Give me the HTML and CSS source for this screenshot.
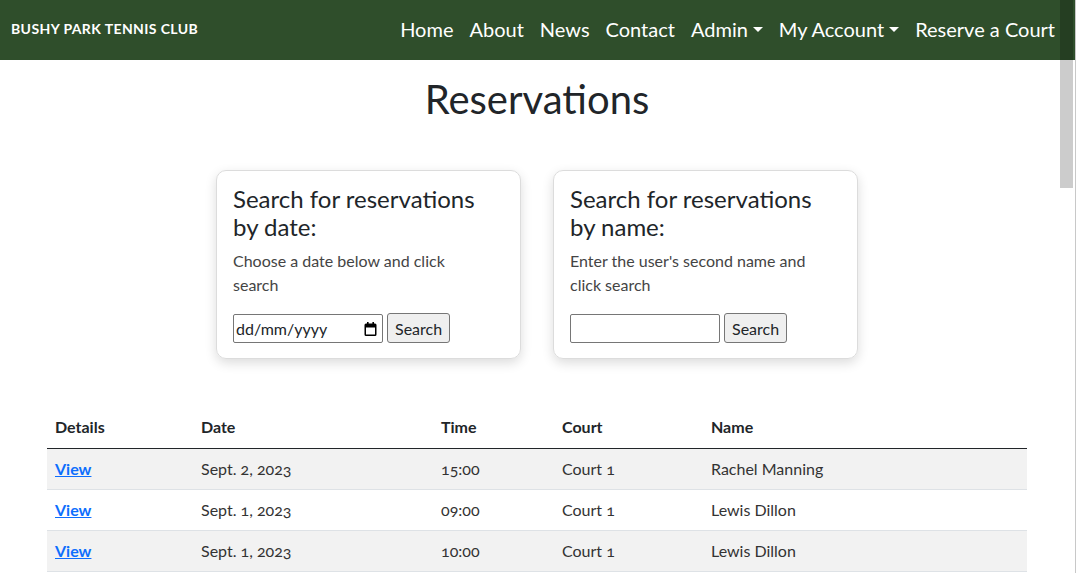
FILE: index.html
```html
<!DOCTYPE html>
<html lang="en-GB">
<head>
<meta charset="utf-8">
<title>Reservations</title>
<link rel="stylesheet" href="styles.css">
</head>
<body>
<nav class="navbar">
  <a class="brand" href="#">BUSHY PARK TENNIS CLUB</a>
  <ul class="nav-links">
    <li><a href="#">Home</a></li>
    <li><a href="#">About</a></li>
    <li><a href="#">News</a></li>
    <li><a href="#">Contact</a></li>
    <li><a href="#" class="dropdown">Admin</a></li>
    <li><a href="#" class="dropdown">My Account</a></li>
    <li><a href="#">Reserve a Court</a></li>
  </ul>
</nav>
<main class="page">
  <h1 class="title">Reservations</h1>
  <section class="cards">
    <div class="card">
      <h4 class="card-title">Search for reservations by date:</h4>
      <p class="card-text">Choose a date below and click search</p>
      <form class="search-form">
        <span class="date-wrap">
          <input type="text" class="field date-field" placeholder="dd/mm/yyyy">
          <svg class="cal-icon" width="13" height="14" viewBox="0 0 13 14" aria-hidden="true">
            <rect x="3" y="0" width="1.6" height="3" fill="#000"/>
            <rect x="8.4" y="0" width="1.6" height="3" fill="#000"/>
            <path d="M2 1.5h9a1.5 1.5 0 0 1 1.5 1.5v9.5a1.5 1.5 0 0 1-1.5 1.5h-9a1.5 1.5 0 0 1-1.5-1.5V3a1.5 1.5 0 0 1 1.5-1.5zM2 5.5v7h9v-7z" fill="#000" fill-rule="evenodd"/>
          </svg>
        </span>
        <button type="button" class="btn">Search</button>
      </form>
    </div>
    <div class="card">
      <h4 class="card-title">Search for reservations by name:</h4>
      <p class="card-text">Enter the user's second name and click search</p>
      <form class="search-form">
        <input type="text" class="field text-field">
        <button type="button" class="btn">Search</button>
      </form>
    </div>
  </section>
  <table class="res-table">
    <thead>
      <tr>
        <th class="c-details">Details</th>
        <th class="c-date">Date</th>
        <th class="c-time">Time</th>
        <th class="c-court">Court</th>
        <th class="c-name">Name</th>
      </tr>
    </thead>
    <tbody>
      <tr class="striped">
        <td><a href="#" class="view">View</a></td>
        <td>Sept. 2, 2023</td>
        <td>15:00</td>
        <td>Court 1</td>
        <td>Rachel Manning</td>
      </tr>
      <tr>
        <td><a href="#" class="view">View</a></td>
        <td>Sept. 1, 2023</td>
        <td>09:00</td>
        <td>Court 1</td>
        <td>Lewis Dillon</td>
      </tr>
      <tr class="striped">
        <td><a href="#" class="view">View</a></td>
        <td>Sept. 1, 2023</td>
        <td>10:00</td>
        <td>Court 1</td>
        <td>Lewis Dillon</td>
      </tr>
    </tbody>
  </table>
</main>
<div class="scroll-thumb"></div>
<div class="scroll-edge"></div>
</body>
</html>
```
FILE: styles.css
```css
html, body {
  margin: 0;
  padding: 0;
  background: #ffffff;
  overflow: hidden;
}
body {
  font-family: "Lato", "Open Sans", sans-serif;
  font-variant-numeric: oldstyle-nums;
  color: #212529;
  font-size: 16px;
  line-height: 1.5;
}
.navbar {
  height: 60px;
  box-sizing: border-box;
  background: #2f4e2b;
  display: flex;
  align-items: center;
  justify-content: space-between;
  padding: 0 13px 3px 11px;
}
.brand {
  color: #ffffff;
  font-weight: 700;
  font-size: 14px;
  text-decoration: none;
  letter-spacing: 0.4px;
}
.nav-links {
  list-style: none;
  display: flex;
  margin: 0;
  padding: 0;
}
.nav-links a {
  display: block;
  color: #ffffff;
  text-decoration: none;
  font-size: 20px;
  padding: 0 8px;
  line-height: 30px;
}
.dropdown::after {
  content: "";
  display: inline-block;
  margin-left: 5px;
  vertical-align: 5px;
  border-top: 5px solid #ffffff;
  border-left: 5px solid transparent;
  border-right: 5px solid transparent;
}
.page {
  width: 980px;
  padding-right: 2px;
  margin: 0 auto;
}
.title {
  text-align: center;
  font-size: 40px;
  font-weight: 400;
  line-height: 48px;
  margin: 15px 0 47px;
}
.cards {
  display: flex;
  justify-content: center;
  gap: 32px;
}
.card {
  width: 305px;
  box-sizing: border-box;
  padding: 14px 16px 15px;
  border: 1px solid #dcdcdc;
  border-radius: 10px;
  box-shadow: 0 4px 12px rgba(0, 0, 0, 0.14);
}
.card-title {
  font-size: 24px;
  font-weight: 400;
  line-height: 28px;
  margin: 0 0 8px;
  padding-right: 10px;
}
.card-text {
  margin: 0 0 16px;
  color: #444444;
  line-height: 24px;
  padding-right: 24px;
}
.search-form {
  display: flex;
  align-items: center;
  gap: 4px;
}
.date-wrap {
  position: relative;
  display: block;
  width: 150px;
  height: 29px;
}
.cal-icon {
  position: absolute;
  right: 6px;
  top: 8px;
  pointer-events: none;
}
.field {
  font-family: inherit;
  font-size: 16px;
  height: 29px;
  box-sizing: border-box;
  border: 1px solid #767676;
  border-radius: 2px;
  padding: 1px 2px;
  color: #212529;
}
.date-field {
  width: 150px;
}
.date-field::placeholder {
  color: #212529;
  opacity: 1;
}
.text-field {
  width: 150px;
}
.btn {
  font-family: inherit;
  font-size: 16px;
  height: 30px;
  padding: 0 7px;
  background: #efefef;
  border: 1px solid #767676;
  border-radius: 3px;
  color: #212529;
}
.res-table {
  width: 980px;
  margin-top: 48px;
  border-collapse: collapse;
}
.res-table th, .res-table td {
  text-align: left;
  padding: 8px;
  border-bottom: 1px solid #dee2e6;
  line-height: 24px;
}
.res-table th {
  font-weight: 700;
  padding-bottom: 9px;
  border-bottom: 1px solid #212529;
}
.res-table td {
  color: #333333;
}
.c-details { width: 130px; }
.c-date { width: 224px; }
.c-time { width: 105px; }
.c-court { width: 133px; }
.striped td {
  background: #f2f2f2;
}
.view {
  color: #0d6efd;
  font-weight: 700;
  text-decoration: underline;
}
.scroll-thumb {
  position: fixed;
  top: 0;
  right: 3px;
  width: 13px;
  height: 188px;
  background: rgba(0, 0, 0, 0.2);
}
.scroll-edge {
  position: fixed;
  top: 0;
  right: 0;
  width: 1px;
  height: 100%;
  background: #c8c8c8;
}
```
